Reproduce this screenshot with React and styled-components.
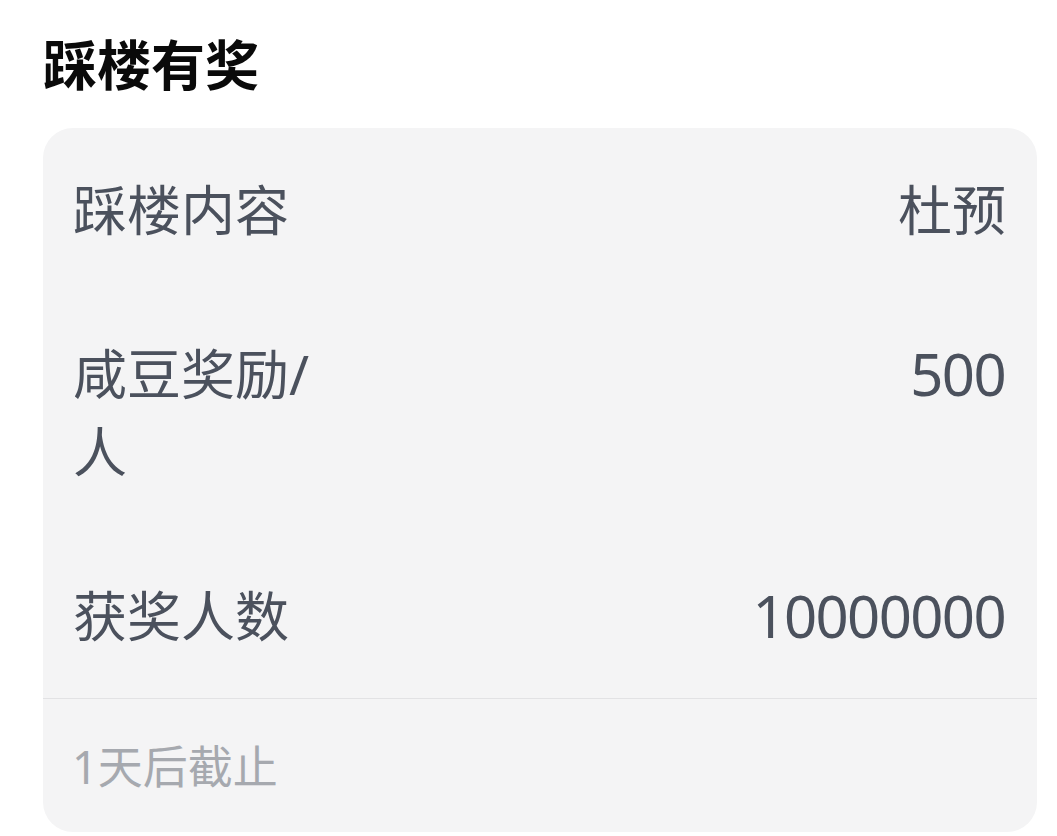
import React from "react";
import styled, { createGlobalStyle } from "styled-components";

const Global = createGlobalStyle`
  html, body { margin: 0; padding: 0; background: #ffffff; }
  body { font-family: "Noto Sans", "Noto Sans CJK SC", sans-serif; }
`;

const Page = styled.div`
  width: 1057px;
  padding: 26px 20px 0 43px;
  box-sizing: border-box;
`;

const Title = styled.h2`
  margin: 0 0 24px 0;
  font-size: 54px;
  line-height: 78px;
  font-weight: 700;
  color: #0a0a0a;
  letter-spacing: 0;
`;

const Card = styled.div`
  background: #f4f4f5;
  border-radius: 30px;
  overflow: hidden;
`;

const Row = styled.div`
  display: flex;
  justify-content: space-between;
  align-items: flex-start;
  padding: 43px 31px 43px 30px;
  font-size: 54px;
  line-height: 78px;
  color: #4b515d;
`;

const Label = styled.div`
  width: 262px;
  flex: 0 0 auto;
  word-break: break-all;
`;

const Value = styled.div`
  text-align: right;
  font-size: ${(p) => (p.$numeric ? "58px" : "54px")};
  letter-spacing: ${(p) => (p.$numeric ? "-1.6px" : "0")};
  margin-right: ${(p) => (p.$numeric ? "1px" : "0")};
`;

const Divider = styled.div`
  height: 1px;
  background: #e2e2e4;
`;

const Footer = styled.div`
  padding: 35px 31px 32px 29px;
  font-size: 45px;
  line-height: 66px;
  color: #a6a9af;
`;

const rows = [
  { label: "踩楼内容", value: "杜预" },
  { label: "咸豆奖励/人", value: "500" },
  { label: "获奖人数", value: "10000000" },
];

export default function App() {
  return (
    <>
      <Global />
      <Page>
        <Title>踩楼有奖</Title>
        <Card>
          {rows.map((r) => (
            <Row key={r.label}>
              <Label>{r.label}</Label>
              <Value $numeric={/^\d+$/.test(r.value)}>{r.value}</Value>
            </Row>
          ))}
          <Divider />
          <Footer>1天后截止</Footer>
        </Card>
      </Page>
    </>
  );
}
